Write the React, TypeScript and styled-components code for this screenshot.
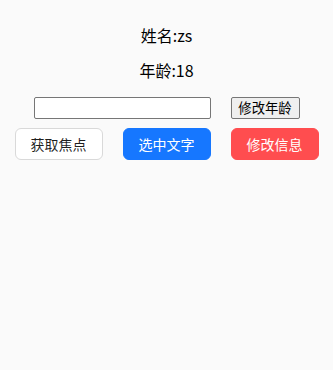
import React, { useRef, useState } from "react";
import styled, { createGlobalStyle } from "styled-components";

const GlobalStyle = createGlobalStyle`
  html, body {
    margin: 0;
    padding: 0;
    background: #fafafa;
  }
  body {
    font-family: "Noto Sans CJK SC", "Noto Sans", sans-serif;
    color: #000;
  }
  * { box-sizing: border-box; }
`;

const Page = styled.div`
  min-height: 370px;
  padding-top: 26px;
  display: flex;
  flex-direction: column;
  align-items: center;
  background: #fafafa;
`;

const InfoLine = styled.p<{ $gap?: number }>`
  margin: 0 0 ${(p) => p.$gap ?? 0}px;
  font-size: 16px;
  line-height: 19px;
  height: 19px;
  color: #000;
`;

const Row = styled.div<{ $top: number }>`
  display: flex;
  align-items: center;
  justify-content: center;
  margin-top: ${(p) => p.$top}px;
`;

const TextInput = styled.input`
  width: 177px;
  height: 22px;
  margin: 0 10px;
  padding: 1px 2px;
  border: 1px solid #767676;
  border-radius: 2px;
  background: #fff;
  font-size: 13.33px;
  font-family: "Noto Sans CJK SC", sans-serif;
  outline: none;
`;

const NativeButton = styled.button`
  width: 69px;
  height: 22px;
  margin: 0 10px;
  padding: 0 6px;
  border: 1px solid #767676;
  border-radius: 2px;
  background: #efefef;
  color: #000;
  font-size: 13.33px;
  line-height: 18px;
  font-family: "Noto Sans CJK SC", sans-serif;
  white-space: nowrap;
  display: flex;
  align-items: center;
  justify-content: center;
`;

type Variant = "default" | "primary" | "danger";

const colors: Record<Variant, { bg: string; border: string; text: string }> = {
  default: { bg: "#ffffff", border: "#d9d9d9", text: "rgba(0,0,0,0.88)" },
  primary: { bg: "#1677ff", border: "#1677ff", text: "#ffffff" },
  danger: { bg: "#ff4d4f", border: "#ff4d4f", text: "#ffffff" },
};

const AntButton = styled.button<{ $variant: Variant }>`
  width: 88px;
  height: 32px;
  margin: 0 10px;
  padding: 4px 15px;
  border: 1px solid ${(p) => colors[p.$variant].border};
  border-radius: 6px;
  background: ${(p) => colors[p.$variant].bg};
  color: ${(p) => colors[p.$variant].text};
  font-size: 14px;
  line-height: 22px;
  font-family: "Noto Sans CJK SC", sans-serif;
  white-space: nowrap;
  display: flex;
  align-items: center;
  justify-content: center;
  cursor: pointer;
`;

export default function App() {
  const [name, setName] = useState("zs");
  const [age, setAge] = useState(18);
  const inputRef = useRef<HTMLInputElement>(null);

  return (
    <>
      <GlobalStyle />
      <Page>
        <InfoLine $gap={16}>姓名:{name}</InfoLine>
        <InfoLine>年龄:{age}</InfoLine>
        <Row $top={17}>
          <TextInput ref={inputRef} type="text" />
          <NativeButton
            onClick={() => {
              const v = Number(inputRef.current?.value);
              if (!Number.isNaN(v) && inputRef.current?.value) setAge(v);
            }}
          >
            修改年龄
          </NativeButton>
        </Row>
        <Row $top={9}>
          <AntButton $variant="default" onClick={() => inputRef.current?.focus()}>
            获取焦点
          </AntButton>
          <AntButton $variant="primary" onClick={() => inputRef.current?.select()}>
            选中文字
          </AntButton>
          <AntButton
            $variant="danger"
            onClick={() => {
              setName("ls");
              setAge(20);
            }}
          >
            修改信息
          </AntButton>
        </Row>
      </Page>
    </>
  );
}
